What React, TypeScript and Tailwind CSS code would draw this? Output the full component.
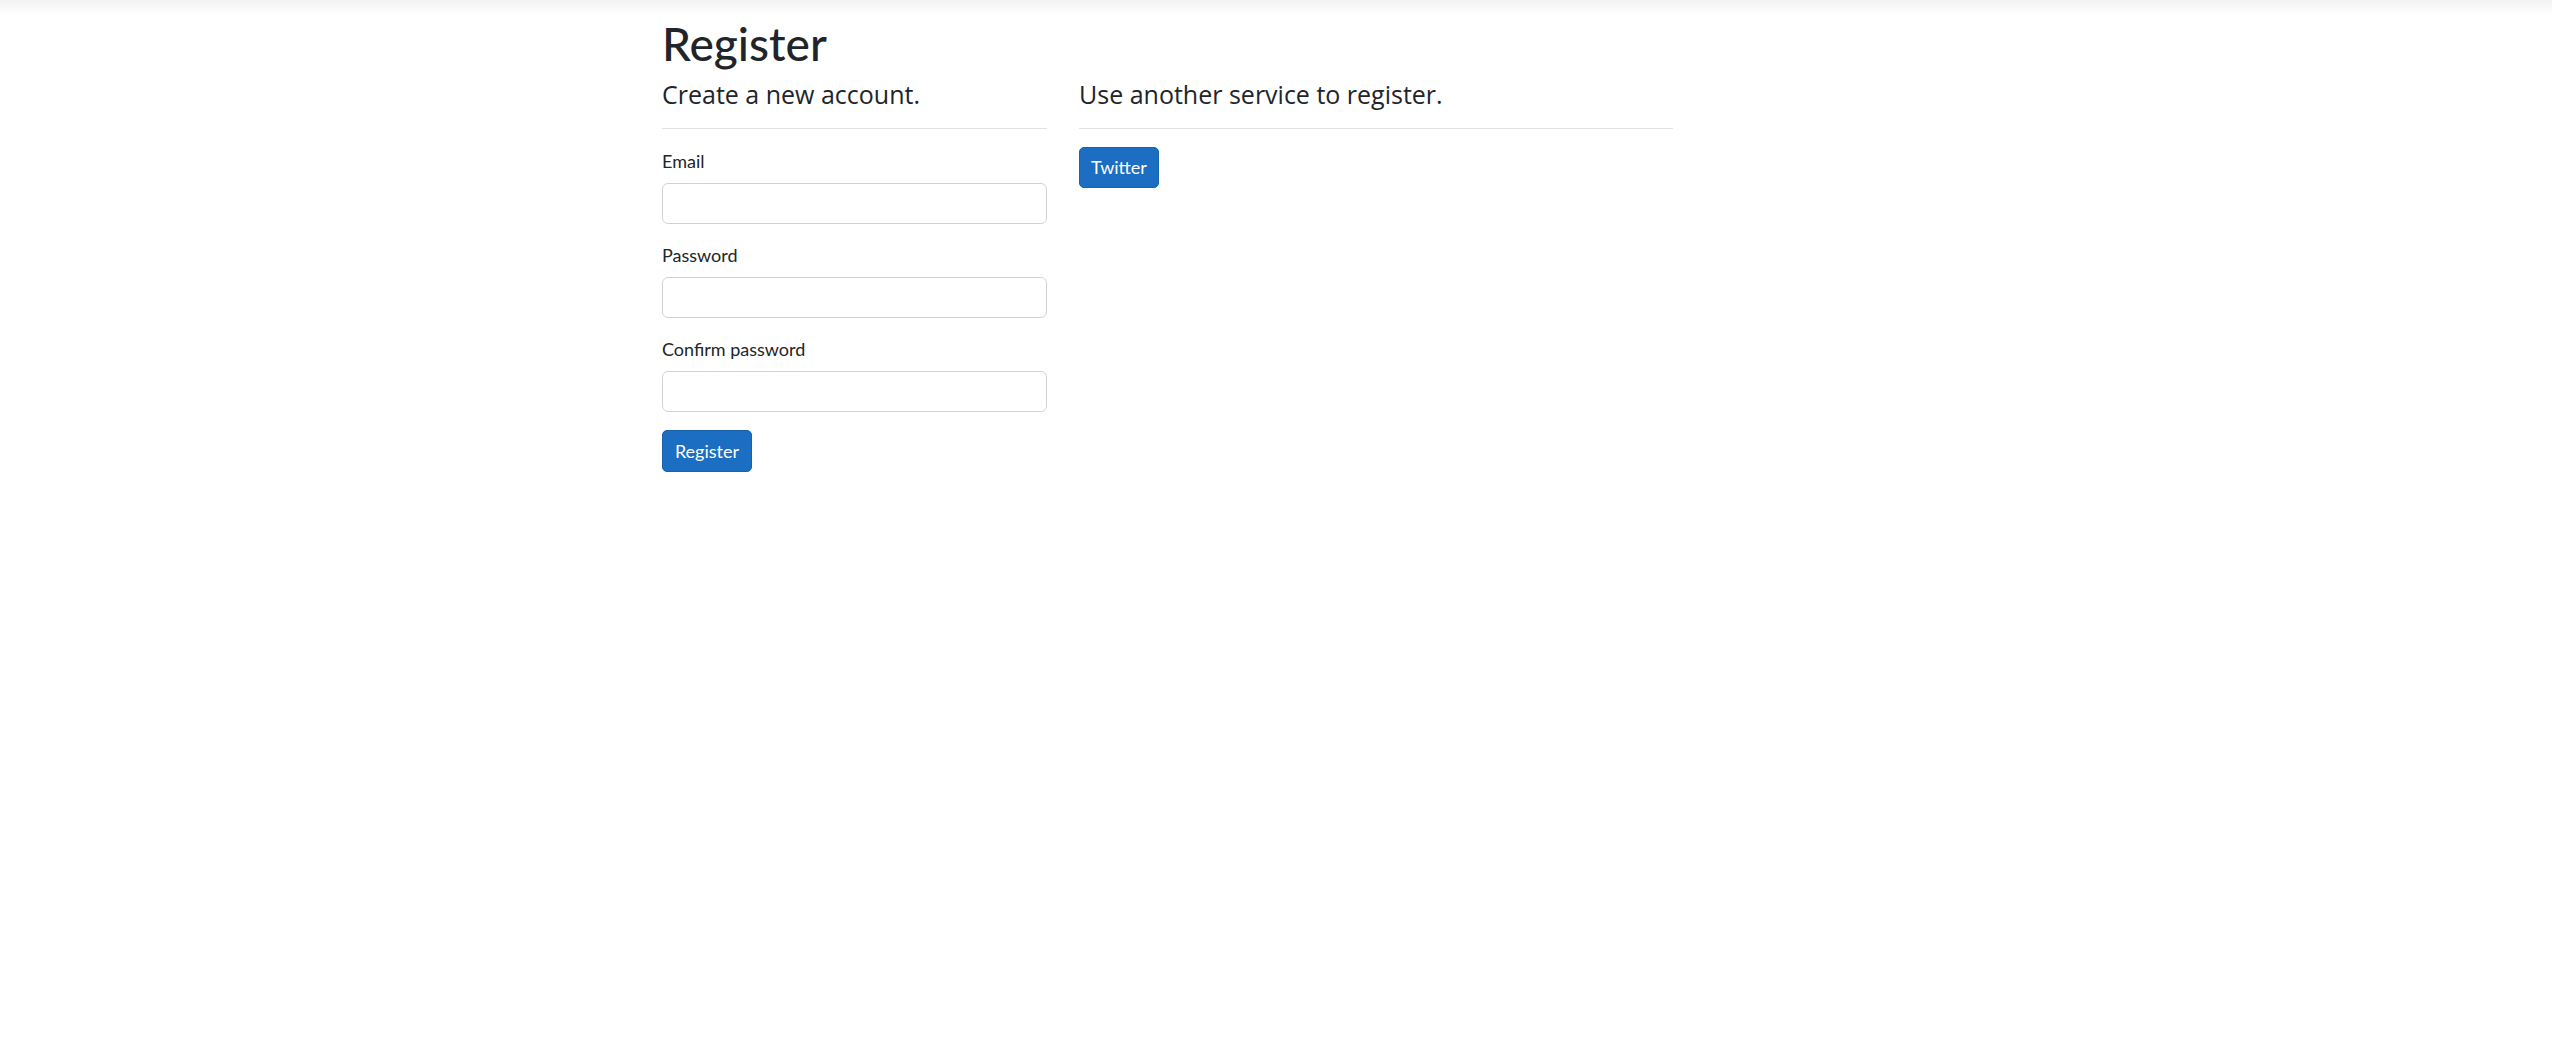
const FONT = '[font-family:Lato,"Open_Sans",sans-serif]';
const HEAD = '[font-family:"Open_Sans",Lato,sans-serif]';

const FIELDS = [
  { id: 'email', label: 'Email', type: 'email' },
  { id: 'password', label: 'Password', type: 'password' },
  { id: 'confirm', label: 'Confirm password', type: 'password' },
];

function Field({ id, label, type }: { id: string; label: string; type: string }) {
  return (
    <div className="mb-[18px]">
      <label htmlFor={id} className="mb-[8px] block h-[27px] text-[18px] leading-[27px]">
        {label}
      </label>
      <input
        id={id}
        type={type}
        className="block h-[41px] w-full rounded-[6px] border border-[#d0d3d6] bg-white px-3 text-[18px] outline-none"
      />
    </div>
  );
}

export default function App() {
  return (
    <div className={`min-h-screen bg-[linear-gradient(#f2f2f2,#ffffff_15px)] text-[#212529] ${FONT}`}>
      <main className="mx-auto w-[1228px] pt-[16px]">
        <h1 className="mb-[8px] text-[46px] font-medium leading-[1.2]">Register</h1>

        <div className="flex gap-[32px]">
          {/* Formulaire local */}
          <section className="w-[385px]">
            <h4 className={`${HEAD} text-[25px] font-medium leading-[30px]`}>Create a new account.</h4>
            <hr className="mt-[19px] mb-[19px] border-0 border-t border-[#e2e2e2]" />
            <form>
              {FIELDS.map((f) => (
                <Field key={f.id} {...f} />
              ))}
              <button
                type="submit"
                className="inline-flex h-[42px] w-[90px] items-center justify-center rounded-[5px] border border-[#1861ac] bg-[#1b6ec2] text-[18px] text-white"
              >
                Register
              </button>
            </form>
          </section>

          {/* Connexion externe */}
          <section className="w-[594px]">
            <h4 className={`${HEAD} text-[25px] font-medium leading-[30px]`}>Use another service to register.</h4>
            <hr className="mt-[19px] mb-[18px] border-0 border-t border-[#e2e2e2]" />
            <button
              type="button"
              className="inline-flex h-[41px] w-[80px] items-center justify-center rounded-[5px] border border-[#1861ac] bg-[#1b6ec2] text-[18px] text-white"
            >
              Twitter
            </button>
          </section>
        </div>
      </main>
    </div>
  );
}
